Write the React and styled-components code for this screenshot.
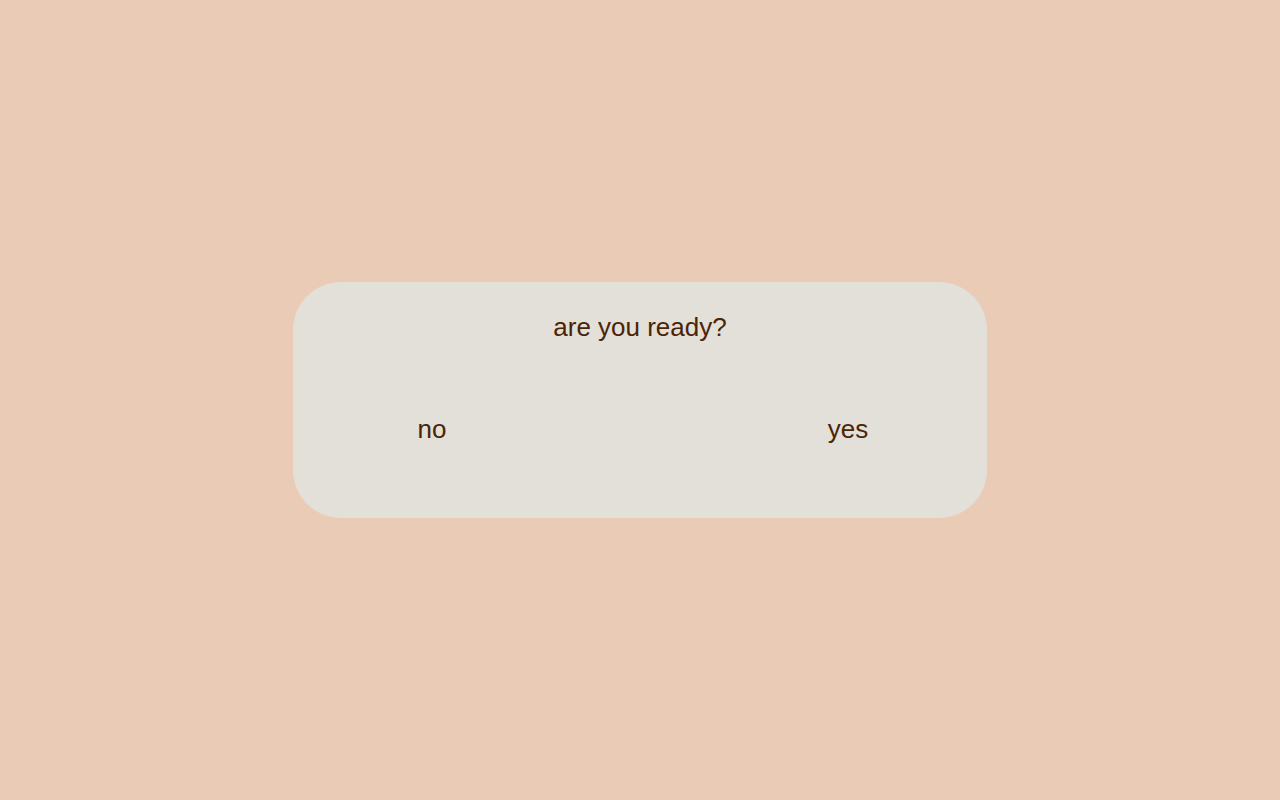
import React from 'react'
import styled, { createGlobalStyle } from 'styled-components'

const GlobalStyle = createGlobalStyle`
  html, body, #root {
    margin: 0;
    height: 100%;
  }
  body {
    background: #eacbb6;
    font-family: 'Liberation Sans', Arial, sans-serif;
  }
`

const Page = styled.div`
  height: 100%;
  display: flex;
  align-items: center;
  justify-content: center;
`

const Card = styled.div`
  width: 694px;
  height: 236px;
  box-sizing: border-box;
  padding-top: 30px;
  background: #e3dfd9;
  border-radius: 48px;
  display: flex;
  flex-direction: column;
  align-items: center;
  color: #4b2407;
`

const Question = styled.div`
  font-size: 26px;
  line-height: 30px;
`

const Choices = styled.div`
  width: 100%;
  box-sizing: border-box;
  margin-top: 72px;
  padding: 0 89px;
  display: flex;
  justify-content: space-between;
`

const Choice = styled.button`
  width: 100px;
  padding: 0;
  border: none;
  background: none;
  font-family: inherit;
  font-size: 26px;
  line-height: 30px;
  color: inherit;
  text-align: center;
  cursor: pointer;
`

const App = () => {
  return (
    <>
      <GlobalStyle />
      <Page>
        <Card>
          <Question>are you ready?</Question>
          <Choices>
            <Choice>no</Choice>
            <Choice>yes</Choice>
          </Choices>
        </Card>
      </Page>
    </>
  )
}

export default App
